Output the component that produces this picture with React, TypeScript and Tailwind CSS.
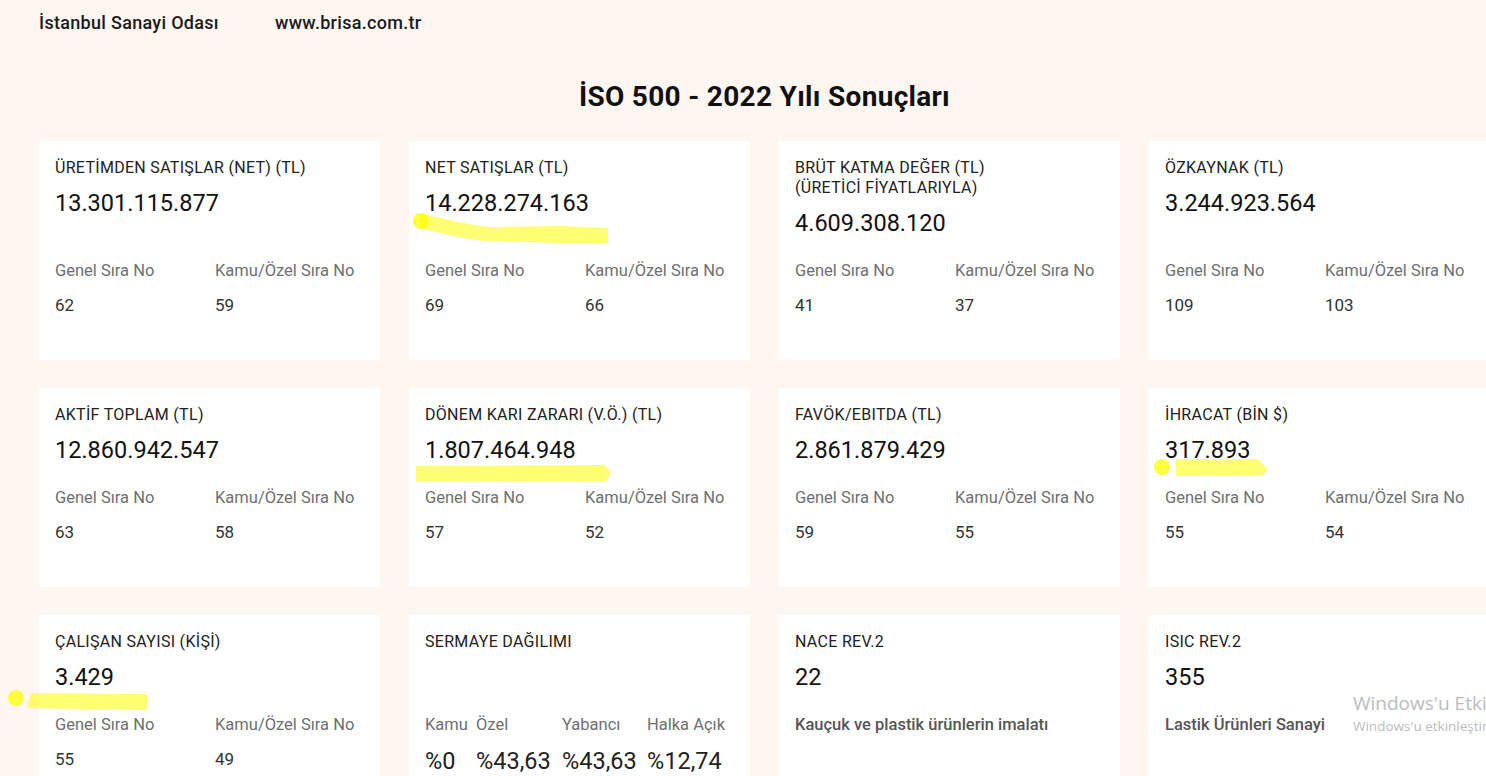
import React from "react";

interface Stat {
  title: React.ReactNode;
  value?: string;
  genel?: string;
  ozel?: string;
  note?: string;
  shares?: { label: string; value: string; w: string }[];
}

const stats: Stat[] = [
  { title: "ÜRETİMDEN SATIŞLAR (NET) (TL)", value: "13.301.115.877", genel: "62", ozel: "59" },
  { title: "NET SATIŞLAR (TL)", value: "14.228.274.163", genel: "69", ozel: "66" },
  {
    title: (
      <>
        BRÜT KATMA DEĞER (TL)
        <br />
        (ÜRETİCİ FİYATLARIYLA)
      </>
    ),
    value: "4.609.308.120",
    genel: "41",
    ozel: "37",
  },
  { title: "ÖZKAYNAK (TL)", value: "3.244.923.564", genel: "109", ozel: "103" },
  { title: "AKTİF TOPLAM (TL)", value: "12.860.942.547", genel: "63", ozel: "58" },
  { title: "DÖNEM KARI ZARARI (V.Ö.) (TL)", value: "1.807.464.948", genel: "57", ozel: "52" },
  { title: "FAVÖK/EBITDA (TL)", value: "2.861.879.429", genel: "59", ozel: "55" },
  { title: "İHRACAT (BİN $)", value: "317.893", genel: "55", ozel: "54" },
  { title: "ÇALIŞAN SAYISI (KİŞİ)", value: "3.429", genel: "55", ozel: "49" },
  {
    title: "SERMAYE DAĞILIMI",
    shares: [
      { label: "Kamu", value: "%0", w: "w-[51px]" },
      { label: "Özel", value: "%43,63", w: "w-[86px]" },
      { label: "Yabancı", value: "%43,63", w: "w-[85px]" },
      { label: "Halka Açık", value: "%12,74", w: "w-auto" },
    ],
  },
  { title: "NACE REV.2", value: "22", note: "Kauçuk ve plastik ürünlerin imalatı" },
  { title: "ISIC REV.2", value: "355", note: "Lastik Ürünleri Sanayi" },
];

const StatCard = ({ stat }: { stat: Stat }) => {
  return (
    <div className="flex flex-col bg-white px-4 pt-[17px] pb-[43px]">
      <div className="text-[16px] leading-5 tracking-[0.3px] text-[#212121]">{stat.title}</div>
      <div className="mt-[9px] h-8 text-[23.5px] leading-8 text-[#111]">{stat.value}</div>

      {/* bottom block sits at the card's foot so rows line up */}
      <div className="mt-auto min-h-[78px] pt-5">
        {stat.shares ? (
          <div className="-mb-1 flex">
            {stat.shares.map((s) => (
              <div key={s.label} className={`flex shrink-0 flex-col gap-[10px] ${s.w}`}>
                <span className="text-[16.5px] leading-6 text-[#6f6f6f]">{s.label}</span>
                <span className="text-[23.5px] leading-7 text-[#222]">{s.value}</span>
              </div>
            ))}
          </div>
        ) : stat.note ? (
          <div className="text-[16.5px] font-medium leading-6 text-[#555]">{stat.note}</div>
        ) : (
          <div className="grid grid-cols-[160px_1fr] gap-y-[10px] leading-6">
            <span className="text-[16.5px] text-[#6f6f6f]">Genel Sıra No</span>
            <span className="text-[16.5px] text-[#6f6f6f]">Kamu/Özel Sıra No</span>
            <span className="text-[17px] text-[#333]">{stat.genel}</span>
            <span className="text-[17px] text-[#333]">{stat.ozel}</span>
          </div>
        )}
      </div>
    </div>
  );
};

export default function App() {
  return (
    <div
      className="relative h-[776px] w-full overflow-hidden bg-[#fdf6f1]"
      style={{ fontFamily: "Roboto, 'Noto Sans', sans-serif" }}
    >
      {/* Header */}
      <div className="flex px-[39px] pt-[11px] text-[18px] font-medium leading-6 tracking-[0.3px] text-[#1a1a1a]">
        <span className="w-[236px]">İstanbul Sanayi Odası</span>
        <span>www.brisa.com.tr</span>
      </div>

      <div className="ml-[39px] w-[1451px]">
        <h1 className="mt-[44px] text-center text-[28px] font-bold leading-9 tracking-[0.3px] text-[#111]">
          İSO 500 - 2022 Yılı Sonuçları
        </h1>

        <div className="mt-[26px] grid grid-cols-[repeat(4,341px)] gap-x-[29px] gap-y-7">
          {stats.map((s, i) => (
            <StatCard key={i} stat={s} />
          ))}
        </div>
      </div>

      {/* highlighter marks drawn over the page */}
      <svg
        className="pointer-events-none absolute left-0 top-0"
        width="1486"
        height="776"
        viewBox="0 0 1486 776"
      >
        <g fill="#ffff00">
          <path
            opacity="0.55"
            d="M421,214 C445,218 465,225 490,227 L560,226 L608,228 L608,243 L560,243 L490,241 C468,240 445,234 419,228 Z"
          />
          <circle cx="421" cy="221" r="8" opacity="0.75" />
          <path opacity="0.55" d="M416,466 L604,465 L611,472 L606,481 L416,481 Z" />
          <path opacity="0.55" d="M1176,459 L1258,459 L1268,470 L1263,475 L1176,475 Z" />
          <circle cx="1162" cy="467" r="8" opacity="0.75" />
          <path opacity="0.55" d="M31,693 L147,694 L147,710 L27,708 Z" />
          <circle cx="16" cy="698" r="8" opacity="0.75" />
        </g>
      </svg>

      {/* OS activation watermark */}
      <div
        className="pointer-events-none absolute left-[1353px] top-[691px] whitespace-nowrap text-[#bcbcbc]"
        style={{ fontFamily: "'Open Sans', 'Noto Sans', sans-serif" }}
      >
        <div className="text-[19px] leading-6">Windows'u Etkinleştir</div>
        <div className="text-[13.5px] leading-[22px]">Windows'u etkinleştirmek için Ayarlar'a gidin.</div>
      </div>
    </div>
  );
}
